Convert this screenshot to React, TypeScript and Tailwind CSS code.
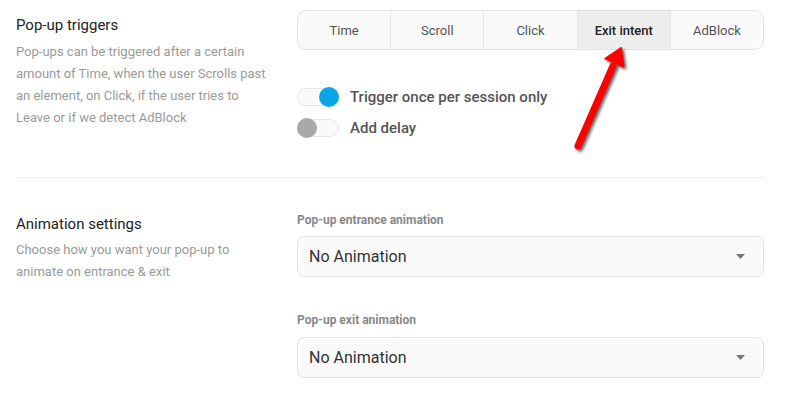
import React from "react";

const tabs = ["Time", "Scroll", "Click", "Exit intent", "AdBlock"];

function Toggle({ on }: { on: boolean }) {
  return (
    <div className="relative w-[42px] h-[20px] flex items-center">
      <div className="absolute left-0 right-0 top-[1px] h-[18px] rounded-full bg-[#fafafa] border border-[#e6e6e6]" />
      <div
        className={
          on
            ? "absolute right-0 top-0 w-[20px] h-[20px] rounded-full bg-[#0aa5e8]"
            : "absolute left-0 top-0 w-[20px] h-[20px] rounded-full bg-[#a9a9a9]"
        }
      />
    </div>
  );
}

function Select() {
  return (
    <div className="h-[41px] w-full rounded-[7px] border border-[#e3e3e3] bg-[#fafafa] flex items-center justify-between pl-[11px] pr-[18px]">
      <span className="text-[16px] text-[#333]">No Animation</span>
      <svg width="9" height="5" viewBox="0 0 9 5">
        <polygon points="0,0 9,0 4.5,5" fill="#777" />
      </svg>
    </div>
  );
}

export default function App() {
  return (
    <div
      className="relative w-[789px] h-[413px] bg-white overflow-hidden"
      style={{ fontFamily: "Roboto, 'Liberation Sans', sans-serif" }}
    >
      <div className="pl-[16px] pr-[25px]">
        {/* Section 1 */}
        <div className="flex items-start pt-[10px]">
          <div className="w-[281px] shrink-0 pt-[5px]">
            <div className="text-[15px] leading-[20px] text-[#222]">Pop-up triggers</div>
            <div className="mt-[6px] text-[13px] leading-[22px] text-[#9a9a9a]">
              Pop-ups can be triggered after a certain
              <br />
              amount of Time, when the user Scrolls past
              <br />
              an element, on Click, if the user tries to
              <br />
              Leave or if we detect AdBlock
            </div>
          </div>
          <div className="flex-1">
            <div className="h-[40px] flex rounded-[9px] border border-[#e3e3e3] overflow-hidden bg-[#fafafa]">
              {tabs.map((t, i) => (
                <div
                  key={t}
                  className={
                    "flex-1 flex items-center justify-center text-[13px] pt-[1px] " +
                    (i > 0 ? "border-l border-[#e6e6e6] " : "") +
                    (t === "Exit intent" ? "bg-[#eeeeee] text-[#222] font-medium" : "text-[#555]")
                  }
                >
                  {t}
                </div>
              ))}
            </div>
            <div className="mt-[37px] flex items-center gap-[11px] h-[20px]">
              <Toggle on />
              <span className="text-[15px] font-medium text-[#555]">Trigger once per session only</span>
            </div>
            <div className="mt-[11px] flex items-center gap-[11px] h-[20px]">
              <Toggle on={false} />
              <span className="text-[15px] font-medium text-[#555]">Add delay</span>
            </div>
          </div>
        </div>

        <div className="mt-[39px] h-[1px] bg-[#ececec]" />

        {/* Section 2 */}
        <div className="flex items-start">
          <div className="w-[281px] shrink-0 pt-[36px]">
            <div className="text-[15px] leading-[20px] text-[#222]">Animation settings</div>
            <div className="mt-[5px] text-[13px] leading-[22px] text-[#9a9a9a]">
              Choose how you want your pop-up to
              <br />
              animate on entrance &amp; exit
            </div>
          </div>
          <div className="flex-1 pt-[35px]">
            <div className="text-[12px] leading-[14px] font-bold text-[#888]">Pop-up entrance animation</div>
            <div className="mt-[9px]">
              <Select />
            </div>
            <div className="mt-[36px] text-[12px] leading-[14px] font-bold text-[#888]">Pop-up exit animation</div>
            <div className="mt-[10px]">
              <Select />
            </div>
          </div>
        </div>
      </div>

      {/* Red annotation arrow */}
      <svg
        className="absolute left-0 top-0 pointer-events-none [filter:drop-shadow(2px_2px_1.5px_rgba(0,0,0,0.6))]"
        width="789"
        height="413"
        viewBox="0 0 789 413"
      >
        <line x1="578" y1="146" x2="613" y2="66" stroke="#f00" strokeWidth="7" strokeLinecap="round" />
        <polygon points="621,48 623.5,66.5 605.5,58.5" fill="#f00" stroke="#f00" strokeWidth="2" strokeLinejoin="round" />
      </svg>
    </div>
  );
}
